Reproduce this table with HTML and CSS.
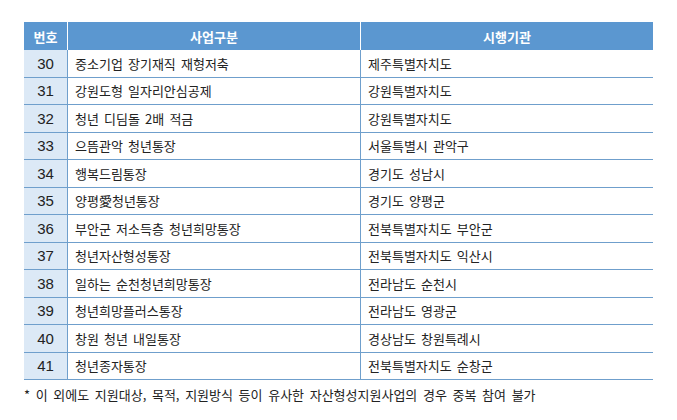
FILE: index.html
```html
<!DOCTYPE html>
<html lang="ko">
<head>
<meta charset="utf-8">
<link rel="stylesheet" href="styles.css">
</head>
<body>
<div class="wrap">
<table class="tbl">
<thead>
<tr><th class="c-no">번호</th><th class="c-name">사업구분</th><th class="c-org">시행기관</th></tr>
</thead>
<tbody>
<tr><td class="no">30</td><td>중소기업 장기재직 재형저축</td><td>제주특별자치도</td></tr>
<tr><td class="no">31</td><td>강원도형 일자리안심공제</td><td>강원특별자치도</td></tr>
<tr><td class="no">32</td><td>청년 디딤돌 2배 적금</td><td>강원특별자치도</td></tr>
<tr><td class="no">33</td><td>으뜸관악 청년통장</td><td>서울특별시 관악구</td></tr>
<tr><td class="no">34</td><td>행복드림통장</td><td>경기도 성남시</td></tr>
<tr><td class="no">35</td><td>양평愛청년통장</td><td>경기도 양평군</td></tr>
<tr><td class="no">36</td><td>부안군 저소득층 청년희망통장</td><td>전북특별자치도 부안군</td></tr>
<tr><td class="no">37</td><td>청년자산형성통장</td><td>전북특별자치도 익산시</td></tr>
<tr><td class="no">38</td><td>일하는 순천청년희망통장</td><td>전라남도 순천시</td></tr>
<tr><td class="no">39</td><td>청년희망플러스통장</td><td>전라남도 영광군</td></tr>
<tr><td class="no">40</td><td>창원 청년 내일통장</td><td>경상남도 창원특례시</td></tr>
<tr><td class="no">41</td><td>청년종자통장</td><td>전북특별자치도 순창군</td></tr>
</tbody>
</table>
<p class="note">* 이 외에도 지원대상, 목적, 지원방식 등이 유사한 자산형성지원사업의 경우 중복 참여 불가</p>
</div>
</body>
</html>
```
FILE: styles.css
```css
html, body {
  margin: 0;
  padding: 0;
  background: #ffffff;
}
.wrap {
  padding: 22px 24px 0 24px;
  width: 629px;
  font-family: "Noto Sans CJK KR", "Noto Sans", sans-serif;
  color: #222222;
}
.tbl {
  width: 629px;
  border-collapse: collapse;
  table-layout: fixed;
}
.tbl th {
  background: #5b97d0;
  color: #ffffff;
  font-weight: bold;
  font-size: 13px;
  height: 28px;
  padding: 0;
  border-left: 1px solid #ffffff;
  line-height: 1;
}
.tbl th:first-child { border-left: none; }
.c-no { width: 43px; }
.c-name { width: 292px; }
.tbl td {
  height: 26.5px;
  padding: 0 0 0 7px;
  font-size: 13px;
  word-spacing: 1.5px;
  border-bottom: 1px solid #6f9fcc;
  border-left: 1px solid #6f9fcc;
  line-height: 1;
  white-space: nowrap;
}
.tbl td.no {
  background: #dce9f6;
  text-align: center;
  padding: 0;
  border-left: none;
  font-family: "Liberation Sans", Arial, sans-serif;
  font-size: 15px;
}
.note {
  margin: 5px 0 0 0;
  font-size: 13px;
  word-spacing: 2px;
  color: #222222;
}
```
